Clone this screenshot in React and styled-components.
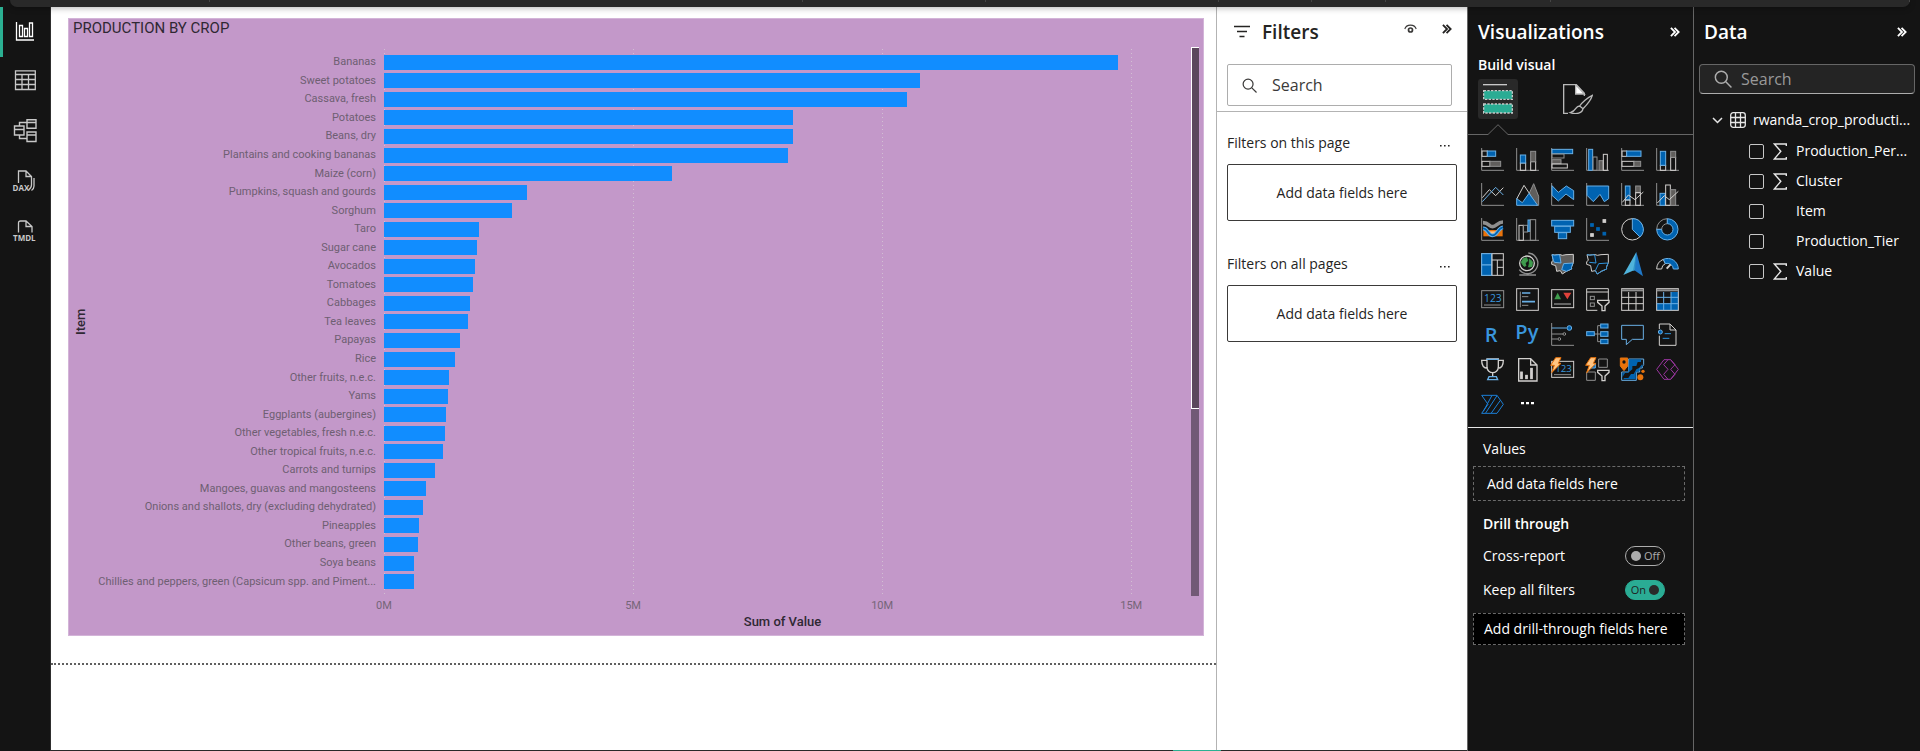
import React from "react";
import styled, { createGlobalStyle } from "styled-components";

const ui = '"Open Sans", "Noto Sans", sans-serif';
const din = 'Roboto, "Liberation Sans", sans-serif';

const GlobalStyle = createGlobalStyle`
  *, *::before, *::after { box-sizing: border-box; }
  body { margin: 0; background: #141414; font-family: ${ui}; font-size: 14px; line-height: 20px; }
  button, input { font: inherit; color: inherit; }
  h2, h3, p, ul { margin: 0; padding: 0; font-size: inherit; font-weight: 400; }
  svg { display: block; flex: none; }
`;

/* ---------- shell ---------- */

const Page = styled.div`
  min-height: 100vh;
  display: flex;
  flex-direction: column;
`;

const Ribbon = styled.header`
  display: flex;
  height: 7px;
  margin: 0 10px;
  background: #292929;
  border-radius: 0 0 10px 10px;
  position: relative;
  z-index: 1;
  box-shadow: 0 1px 6px rgba(0, 0, 0, 0.3);
`;

const RibbonGroup = styled.div`
  flex: ${(p) => p.$span} 1 0;
  height: 2px;
  border-right: 1px solid #454545;
`;

const Workspace = styled.div`
  flex: 1;
  display: flex;
`;

const IconButton = styled.button`
  display: flex;
  align-items: center;
  justify-content: center;
  padding: 0;
  border: 0;
  background: none;
  cursor: pointer;
`;

/* ---------- left rail ---------- */

const Rail = styled.nav`
  flex: none;
  width: 51px;
  background: #141414;
  border-right: 1px solid #2e2e2e;
  display: flex;
  flex-direction: column;
`;

const RailButton = styled(IconButton)`
  height: 50px;
  width: 100%;
  padding-right: 3px;
  border-left: 3px solid ${(p) => (p.$active ? "#2bb092" : "transparent")};
  color: ${(p) => (p.$active ? "#ffffff" : "#c8c8c8")};
`;

/* ---------- report canvas ---------- */

const Canvas = styled.main`
  flex: 1;
  min-width: 0;
  background: #ffffff;
  display: flex;
  flex-direction: column;
`;

const ReportPage = styled.div`
  padding: 11px 12px 27px 17px;
  border-bottom: 2px dotted #606060;
`;

const Card = styled.section`
  display: flex;
  flex-direction: column;
  padding: 1px 4px 3px;
  background: #c398c9;
  border: 1px solid #d3b4d8;
`;

const CardTitle = styled.h2`
  font-family: ${din};
  font-size: 15px;
  line-height: 17px;
  font-weight: 400;
  color: #2f2833;
`;

const ChartBody = styled.div`
  display: grid;
  grid-template-columns: 16px 295px minmax(0, 1fr) 8px;
  grid-template-rows: auto 18px 18px;
  padding-top: 10px;
`;

const AxisTitle = styled.div`
  font-family: ${din};
  font-size: 13px;
  line-height: 16px;
  font-weight: 500;
  color: #2f2833;
  text-align: center;
  ${(p) => p.$vertical && "writing-mode: vertical-rl; transform: rotate(180deg);"}
  ${(p) => !p.$vertical && "grid-column: 3; grid-row: 3; margin-right: 10px;"}
`;

const Plot = styled.ul`
  grid-column: 2 / 4;
  grid-row: 1;
  height: 549px;
  padding: 6px 10px 5px 0;
  list-style: none;
  display: flex;
  flex-direction: column;
  z-index: 1;
`;

const BarRow = styled.li`
  flex: 1;
  display: grid;
  grid-template-columns: 295px minmax(0, 1fr);
  align-items: center;
`;

const BarLabel = styled.span`
  padding-right: 8px;
  text-align: right;
  white-space: nowrap;
  font-family: ${din};
  font-size: 11px;
  line-height: 18px;
  color: #6e5f72;
`;

const Bar = styled.div`
  height: 15px;
  background: #118dff;
`;

const GridColumns = styled.div`
  grid-column: 3;
  grid-row: ${(p) => p.$row};
  display: grid;
  grid-template-columns: 5fr 5fr 5fr 1fr;
  margin-right: 10px;
`;

const GridLine = styled.div`
  width: 1px;
  margin-top: 2px;
  background: repeating-linear-gradient(#d2bfd3 0 1px, transparent 1px 4px);
`;

const Tick = styled.span`
  justify-self: start;
  transform: translateX(-50%);
  font-family: ${din};
  font-size: 11px;
  line-height: 20px;
  color: #756578;
`;

const ScrollTrack = styled.div`
  grid-column: 4;
  grid-row: 1;
  background: #725976;
`;

const ScrollThumb = styled.div`
  height: 66%;
  background: #5b475c;
  border: solid #ffffff;
  border-width: 1px 0 1px 1px;
`;

const StatusLine = styled.footer`
  display: flex;
  justify-content: flex-end;
  height: 1px;
  margin: -1px 453px 0 51px;
  padding-right: 246px;
  background: #292929;
  z-index: 1;

  &::after {
    content: "";
    width: 48px;
    background: #2bb092;
  }
`;

/* ---------- side panes ---------- */

const Pane = styled.aside`
  flex: none;
  width: ${(p) => p.$width};
  display: flex;
  flex-direction: column;
  background: ${(p) => (p.$light ? "#ffffff" : "#141414")};
  color: ${(p) => (p.$light ? "#252423" : "#ffffff")};
  border-left: 1px solid ${(p) => (p.$light ? "#b3b3b3" : "#666666")};
`;

const PaneHeader = styled.header`
  display: flex;
  align-items: center;
  gap: 12px;
  height: 50px;
  padding: 0 ${(p) => p.$right} 0 ${(p) => p.$left};
`;

const PaneTitle = styled.h2`
  flex: 1;
  font-size: 19px;
  line-height: 24px;
  font-weight: 600;
`;

const HeaderActions = styled.div`
  display: flex;
  align-items: center;
  gap: 25px;
  height: 44px;
  align-self: flex-start;
`;

const SearchBox = styled.label`
  display: flex;
  align-items: center;
  gap: ${(p) => (p.$light ? "15px" : "9px")};
  height: ${(p) => (p.$light ? "42px" : "30px")};
  margin: ${(p) => (p.$light ? "7px 15px 5px 10px" : "7px 5px 0")};
  padding: 0 14px;
  border: 1px solid ${(p) => (p.$light ? "#adadad" : "#666666")};
  border-bottom-color: #adadad;
  border-radius: ${(p) => (p.$light ? "2px" : "4px")};
  background: ${(p) => (p.$light ? "#ffffff" : "#242424")};
`;

const SearchInput = styled.input`
  flex: 1;
  min-width: 0;
  padding: 0;
  border: 0;
  outline: 0;
  background: none;
  font-size: 16px;
  line-height: 20px;

  &::placeholder { color: ${(p) => (p.$light ? "#3b3a39" : "#999999")}; opacity: 1; }
`;

const FilterSection = styled.section`
  padding: 0 10px;
  margin-top: 20px;
  margin-bottom: 12px;
`;

const FilterHeading = styled.div`
  display: flex;
  align-items: center;
  justify-content: space-between;
  height: 22px;
  padding-right: 7px;
  margin-bottom: 10px;
`;

const MoreButton = styled(IconButton)`
  padding-top: 6px;
`;

const FilterWell = styled.div`
  display: flex;
  align-items: center;
  justify-content: center;
  height: 57px;
  border: 1px solid #3b3a39;
  border-radius: 2px;
`;

const Rule = styled.div`
  height: 1px;
  background: ${(p) => p.$color};
`;

const BuildTitle = styled.h3`
  padding: 0 10px;
  margin: -2px 0 4px;
  font-weight: 600;
`;

const BuildTabs = styled.div`
  display: flex;
  gap: 40px;
  padding: 0 10px;
`;

const BuildTab = styled(IconButton)`
  width: 40px;
  height: 40px;
  border-radius: 3px;
  background: ${(p) => (p.$active ? "#292929" : "none")};
`;

const TabRule = styled.div`
  display: flex;
  align-items: flex-end;
  height: 16px;
`;

const TabRuleLine = styled.span`
  height: 1px;
  width: ${(p) => p.$width};
  flex: ${(p) => (p.$grow ? 1 : "none")};
  background: #666666;
`;

const Gallery = styled.div`
  display: grid;
  grid-template-columns: repeat(6, 23px);
  grid-auto-rows: 23px;
  gap: 12px;
  padding: 13px 13px 11px;
`;

const Fields = styled.section`
  padding: 11px 8px 0 5px;
`;

const FieldLabel = styled.div`
  padding-left: 10px;
  height: 20px;
  font-weight: ${(p) => (p.$strong ? 600 : 400)};
  margin-top: ${(p) => p.$top || "0"};
`;

const TogglesGroup = styled.div`
  padding-top: 5px;
`;

const DropWell = styled.div`
  display: flex;
  align-items: center;
  height: ${(p) => p.$height};
  margin-top: ${(p) => p.$top};
  padding-left: ${(p) => p.$indent};
  border: 1px dashed #6a6a6a;
  background: ${(p) => (p.$filled ? "#000000" : "none")};
  white-space: nowrap;
`;

const ToggleRow = styled.div`
  display: flex;
  align-items: center;
  justify-content: space-between;
  height: 34px;
  padding: 0 20px 0 10px;
`;

const Toggle = styled.label`
  display: flex;
  flex-direction: ${(p) => (p.$on ? "row-reverse" : "row")};
  align-items: center;
  gap: 3px;
  width: 40px;
  height: 20px;
  padding: 0 5px;
  border: 1px solid ${(p) => (p.$on ? "#2aac94" : "#adadad")};
  border-radius: 10px;
  background: ${(p) => (p.$on ? "#2aac94" : "transparent")};
  color: ${(p) => (p.$on ? "#1f1f1f" : "#adadad")};
  font-size: 11px;
  line-height: 18px;
`;

const ToggleKnob = styled.input`
  appearance: none;
  flex: none;
  width: 10px;
  height: 10px;
  margin: 0;
  border-radius: 50%;
  background: ${(p) => (p.$on ? "#292929" : "#adadad")};
`;

/* ---------- data tree ---------- */

const TableRow = styled.div`
  display: flex;
  align-items: center;
  gap: 7px;
  height: 30px;
  margin-top: 11px;
  padding-left: 18px;
  white-space: nowrap;
`;

const FieldList = styled.div`
  padding-top: 1px;
`;

const FieldRow = styled.label`
  display: grid;
  grid-template-columns: 15px 14px 1fr;
  align-items: center;
  column-gap: 9px;
  height: 30px;
  padding-left: 55px;
  white-space: nowrap;
`;

const FieldCheck = styled.input`
  appearance: none;
  width: 15px;
  height: 15px;
  margin: 0;
  border: 1px solid #c8c8c8;
  border-radius: 2px;
`;

/* ---------- small icons ---------- */

const Chevrons = () => (
  <svg width="10" height="10" viewBox="0 0 11 11" fill="none" stroke="currentColor" strokeWidth="2">
    <path d="M1 1l4.500 4.500L1 10M5 1l4.500 4.500L5 10" />
  </svg>
);

const Magnifier = ({ size, color }) => (
  <svg width={size} height={size} viewBox="0 0 16 16" fill="none" stroke={color} strokeWidth="1.3">
    <circle cx="6.5" cy="6.5" r="5.3" />
    <path d="M10.5 10.5l5 5" />
  </svg>
);

const FilterLines = () => (
  <svg width="16" height="14" viewBox="0 0 16 14" stroke="#252423" strokeWidth="1.5">
    <path d="M0 1.500h16M3 6.500h10M5.500 11.500h5" />
  </svg>
);

const Eye = () => (
  <svg width="13" height="10" viewBox="0 0 13 10" fill="none" stroke="#3b3a39">
    <path d="M.8 5C2.300-.2 10.700-.2 12.200 5" strokeWidth="1.1" />
    <circle cx="6.500" cy="6" r="2" strokeWidth="1.700" />
  </svg>
);

const Dots = () => (
  <svg width="10" height="2" viewBox="0 0 10 2" fill="currentColor">
    <path d="M0 0h1.600v1.600H0zM4 0h1.600v1.600H4zM8 0h1.600v1.600H8z" />
  </svg>
);

const Sigma = () => (
  <svg width="14" height="17" viewBox="0 0 14 17" fill="none" stroke="#e6e6e6" strokeWidth="1.4">
    <path d="M13.300 3V1H1.300l6.500 7.300-6.500 7.700h12v-2" />
  </svg>
);

const TableGlyph = () => (
  <svg width="16" height="16" viewBox="0 0 16 16" fill="none" stroke="#e6e6e6" strokeWidth="1.3">
    <rect x=".7" y=".7" width="14.600" height="14.600" rx="2.500" />
    <path d="M5.500.7v14.600M10.500.7v14.600M.7 5.500h14.600M.7 10.500h14.600" />
  </svg>
);

const railViews = [
  {
    name: "Report view",
    art: (
      <g strokeWidth="1.300">
        <path d="M3.500 2v18H21" />
        <path d="M6.500 5.500h3v11h-3zM11.500 8.500h3v8h-3zM16.500 3h3v13.500h-3z" />
      </g>
    ),
  },
  {
    name: "Table view",
    art: (
      <g strokeWidth="1.300">
        <path d="M2.500.8h19.800v18.700H2.500zM2.500 4.500h19.800" />
        <path d="M2.500 9.500h19.800M2.500 14.500h19.800M9 4.500v15M15.500 4.500v15" />
      </g>
    ),
  },
  {
    name: "Model view",
    art: (
      <g strokeWidth="1.400">
        <path d="M14-.2h9v8.500h-9zM14 2.500h9M14 12h9v9.500h-9zM14 15h9M1.500 6h9.500v9H1.500zM1.500 9.500H11" />
        <path d="M6.500 6V2.500H14M6.500 15v3.500H14" />
      </g>
    ),
  },
  {
    name: "DAX query view",
    art: (
      <g strokeWidth="1.300">
        <path d="M5.500 13V1h7.500l5.500 5.500v8.500q0 3-3 5M13 1v5.500h5.500M21 8v8q0 3-2.500 4.500" />
        <text x="-.5" y="20.500">DAX</text>
      </g>
    ),
  },
  {
    name: "TMDL view",
    art: (
      <g strokeWidth="1.300">
        <path d="M5.500 12.500V3q0-2 2-2H13l6 5.500v6M13 1v5.500h6" />
        <text x="0" y="21">TMDL</text>
      </g>
    ),
  },
];

const RailArt = styled.svg`
  fill: none;
  stroke: currentColor;
  overflow: visible;

  text {
    fill: currentColor;
    stroke: none;
    font: 700 8px ${ui};
  }
`;

/* ---------- visual gallery icons ---------- */

const W = "#d2d0ce";
const G = "#8f8f8f";
const D = "#605e5c";
const B = "#0063b1";
const L = "#69afe5";

const Axis = () => <path d="M2 0V67H69" stroke={G} />;
const box = (x, y, w, h, stroke, fill) => (
  <rect x={x} y={y} width={w} height={h} stroke={stroke} fill={fill || "none"} />
);
const Bolt = () => (
  <path d="M14-1H30L22 16H30L2 44L10 22H-1Z" fill="#ffc583" stroke="#e8730c" strokeWidth="3" />
);
const Funnel = () => (
  <path d="M35 37H69V43L57 54V68H48V54L35 43Z" fill="#141414" stroke={W} strokeWidth="4" />
);
const mapShape = "M3 5C15 9 24 1 34 7L45 5 67 4V29C63 40 60 42 62 48L46 55 34 63 28 53 17 55 14 38 2 34V26L7 22Z";

const visuals = [
  ["Stacked bar chart", <><Axis />{box(3, 9, 16, 16, W)}{box(19, 9, 25, 16, L, B)}{box(3, 40, 24, 15, W)}{box(27, 40, 32, 15, G, D)}</>],
  ["Stacked column chart", <><Axis />{box(13, 45, 16, 22, W)}{box(13, 21, 16, 24, L, B)}{box(44, 41, 15, 26, W)}{box(44, 10, 15, 31, G, D)}</>],
  ["Clustered bar chart", <><Axis />{box(3, 4, 62, 13, L, B)}{box(3, 18, 36, 12, G)}{box(3, 35, 27, 12, G, D)}{box(3, 48, 46, 12, W)}</>],
  ["Clustered column chart", <><Axis />{box(8, 4, 12, 63, L, B)}{box(21, 27, 12, 40, G)}{box(39, 38, 12, 29, G, D)}{box(52, 19, 12, 48, W)}</>],
  ["100% stacked bar chart", <><Axis />{box(3, 9, 14, 16, W)}{box(17, 9, 43, 16, L, B)}{box(3, 40, 36, 15, W)}{box(39, 40, 20, 15, G, D)}</>],
  ["100% stacked column chart", <><Axis />{box(13, 52, 16, 15, W)}{box(13, 10, 16, 42, L, B)}{box(44, 28, 15, 39, W)}{box(44, 10, 15, 18, G, D)}</>],
  ["Line chart", <><Axis /><path d="M4 44L25 20 44 38 67 14" stroke={W} /><path d="M4 56L44 13 67 36" stroke={L} /></>],
  ["Area chart", <><path d="M40 30L53 2 68 40V67H60Z" fill={D} stroke={G} /><path d="M2 48L24 7 42 34" stroke={W} /><path d="M2 67V47L19 59 39 31 65 67Z" fill={B} stroke={L} /></>],
  ["Stacked area chart", <><Axis /><path d="M3 8L22 28 46 9 68 23V50L45 33 22 54 3 37Z" fill={B} stroke={L} /></>],
  ["100% stacked area chart", <><Axis /><path d="M3 9H68V47L55 56 42 34 22 56 3 37Z" fill={B} stroke={L} /></>],
  ["Line and stacked column chart", <><Axis />{box(13, 9, 14, 42, L, B)}{box(13, 51, 14, 16, W)}{box(44, 9, 14, 20, G, D)}{box(44, 29, 14, 38, W)}<path d="M4 58L22 36 42 50 67 27" stroke={W} /></>],
  ["Line and clustered column chart", <><Axis />{box(12, 31, 16, 36, L, B)}{box(29, 6, 14, 61, W)}{box(44, 20, 15, 47, G, D)}<path d="M4 60L25 38 40 50 67 25" stroke={W} /></>],
  ["Ribbon chart", <><Axis /><path d="M7 36H65V55H7Z" fill="#e8730c" /><path d="M26 40H45V52H26Z" fill="#ffc583" /><path d="M6 14C24 14 24 26 35 26S50 12 66 12" stroke={G} strokeWidth="11" /><path d="M6 31C22 31 20 52 35 52S50 30 66 28" stroke={L} strokeWidth="11" /><path d="M6 31C22 31 20 52 35 52S50 30 66 28" stroke={B} strokeWidth="5" /></>],
  ["Waterfall chart", <><Axis />{box(9, 22, 13, 45, W)}{box(22, 22, 13, 20, G)}{box(36, 6, 6, 34, L, B)}{box(43, 5, 16, 62, G)}</>],
  ["Funnel", <>{box(2, 7, 66, 17, L, B)}{box(11, 25, 47, 18, L, B)}{box(22, 44, 25, 18, L, B)}</>],
  ["Scatter chart", <><Axis />{box(14, 17, 8, 8, B, B)}{box(51, 5, 8, 8, W, W)}{box(32, 29, 8, 8, B, B)}{box(14, 47, 8, 8, W, W)}{box(51, 43, 8, 8, B, B)}</>],
  ["Pie chart", <><circle cx="34" cy="34" r="32" stroke={W} /><path d="M34 2A32 32 0 0 1 57 57L34 34Z" fill={B} stroke={L} /></>],
  ["Donut chart", <><path d="M34 2A32 32 0 0 0 2 34H17A17 17 0 0 1 34 17Z" stroke={G} /><path d="M34 2A32 32 0 1 1 2 34H17A17 17 0 1 0 34 17Z" fill={B} stroke={L} /></>],
  ["Treemap", <>{box(2, 2, 65, 65, W)}{box(2, 2, 30, 34, L, B)}{box(2, 36, 30, 31, L, B)}<path d="M33 21H67M49 21V67M49 43H67M33 2V67" stroke={W} /></>],
  ["Map", <><circle cx="33" cy="31" r="22" stroke={W} strokeWidth="4" /><path d="M22 17L32 14 35 24 27 30 30 38 24 40 16 28ZM40 18L49 26 48 40 38 42 40 32Z" fill="#3f9c4d" stroke="#3f9c4d" /><path d="M37 0A31 31 0 1 1 10 50M36 60V66M10 66H60" stroke={G} strokeWidth="4" /></>],
  ["Filled map", <><path d={mapShape} fill={D} stroke={W} /><path d="M3 5C15 9 20 3 26 6L30 30 10 28 7 22Z" fill={B} stroke={L} /><path d="M38 32L66 30C63 40 60 42 62 48L46 55 32 50Z" fill={B} stroke={L} /></>],
  ["Shape map", <><path d={mapShape} stroke={W} /><path d="M3 5C15 9 20 3 26 6L30 30 10 28M38 32L66 30C63 40 60 42 62 48L46 55 34 63 28 53L38 32Z" stroke="#2f93dc" /></>],
  ["Azure map", <><path d="M46-3L7 66 42 50Z" fill="#50b4dc" /><path d="M46-3L66 70 40 52Z" fill="#1f78c8" /><path d="M46-3L42 52 36 54Z" fill="#2f93c8" /></>],
  ["Gauge", <><path d="M2 48A32 32 0 0 1 22 19L28 32A18 18 0 0 0 17 48Z" stroke={W} /><path d="M22 19A32 32 0 0 1 67 48H52A18 18 0 0 0 28 32Z" fill={B} stroke={L} /><path d="M32 47L44 34" stroke={W} strokeWidth="6" /></>],
  ["Card", <>{box(2, 8, 66, 51, G)}<text x="9" y="43" fontSize="31" fill="#3a96dd">123</text><path d="M9 51H59" stroke={G} /></>],
  ["Multi-row card", <>{box(2, 2, 65, 65, W)}<path d="M13 11V58M18 26H37M18 52H37" stroke={G} /><path d="M18 15H43M18 41H57" stroke={L} strokeWidth="5" /></>],
  ["KPI", <>{box(2, 5, 66, 54, W)}<path d="M10 34L20 14 30 34Z" fill="#3f9c4d" /><path d="M37 14H61L49 34Z" fill="#e0413a" /><path d="M9 48H60" stroke={G} strokeWidth="4" /></>],
  ["Slicer", <><path d="M34 67H2V2H67V36M2 12H67" stroke={W} />{box(13, 25, 12, 10, G)}{box(13, 45, 12, 10, G)}<Funnel /></>],
  ["Table", <>{box(2, 2, 65, 65, W)}<path d="M2 7H67" stroke={G} strokeWidth="6" /><path d="M2 28H67M2 47H67M23 12V67M45 12V67" stroke={W} /></>],
  ["Matrix", <><path d="M45 12H67V67H2V47H45Z" fill={B} />{box(2, 2, 65, 65, W)}<path d="M2 7H67" stroke={G} strokeWidth="6" /><path d="M2 28H67M2 47H67M23 12V67M45 12V67" stroke={L} /></>],
  ["R script visual", <text x="11" y="57" fontSize="60" fontWeight="600" fill="#3a96dd">R</text>],
  ["Python visual", <text x="-2" y="48" fontSize="60" fontWeight="600" fill="#3a96dd">Py</text>],
  ["Key influencers", <><Axis /><path d="M2 33H37M2 48H20" stroke={G} /><circle cx="40" cy="33" r="4" stroke={G} /><circle cx="25" cy="48" r="4" stroke={G} /><path d="M2 15H47" stroke={L} /><circle cx="55" cy="15" r="7" fill={B} stroke={L} /></>],
  ["Decomposition tree", <><path d="M25 33H44M35 8V56M35 8H44M35 56H44" stroke={G} />{box(2, 26, 23, 12, L, B)}{box(44, 3, 22, 12, L, B)}{box(44, 26, 22, 14, L, B)}{box(44, 49, 22, 13, L, B)}</>],
  ["Q&A", <path d="M2 7H67V49H34L16 65V49H2Z" stroke={L} />],
  ["Narrative", <><path d="M10 18V3H42L60 21V67H10V38M42 3V21H60" stroke={W} /><circle cx="13" cy="27" r="6" fill={B} stroke={L} /><path d="M26 32H45M20 46H40" stroke="#2f93dc" /></>],
  ["Metrics", <><path d="M18 3H52V26C52 38 43 44 35 44S18 38 18 26ZM18 7H2C2 24 8 31 20 31M52 7H67C67 24 62 31 50 31M35 44V56" stroke={W} strokeWidth="4" /><path d="M16 4H54M20 65H50L46 56H24Z" stroke={L} strokeWidth="4" /></>],
  ["Paginated report", <><path d="M8 2H44L63 21V69H8ZM44 2V21H63" stroke={W} strokeWidth="4" />{box(14, 42, 5, 20, W, W)}{box(29, 52, 5, 10, W, W)}{box(44, 31, 5, 31, W, W)}</>],
  ["New card", <>{box(2, 10, 66, 48, W)}<text x="13" y="43" fontSize="29" fill="#3a96dd">123</text><path d="M9 50H60" stroke={G} /><Bolt /></>],
  ["Button slicer", <><path d="M38 3H64V28H38ZM2 42H28V67H2Z" stroke={G} /><path d="M28 18V30H14Z" fill={B} stroke={L} /><Bolt /><Funnel /></>],
  ["ArcGIS map", <><path d="M23 3H68V20L64 26V30H56V42H46V67H2V42H23Z" fill="#141414" stroke={L} /><path d="M24 4H60V12H50L46 24H34V34L24 42H14L4 58V44H22Z" fill={B} /><path d="M64 18V28H56V38L44 44V64H8V60H22L30 48H38L46 34 54 30Z" fill={B} /><path d="M-2 0H20V24L9 38-2 24Z" fill="#e8730c" stroke="#e8730c" /><circle cx="9" cy="12" r="5" fill="#141414" /><circle cx="58" cy="58" r="9" fill="#e8730c" /><circle cx="66" cy="40" r="5" fill="#e8730c" /></>],
  ["Power Apps", <path d="M24 5H44L57 20 44 34 57 49 44 64H24L2 34ZM36 5L23 20 36 34 23 49 36 64M44 5L67 34 44 64" stroke="#9b35a0" />],
  ["Power Automate", <path d="M2 7H48L67 34 48 61H2L21 34ZM33 7L7 55M48 8L14 60M58 22L31 60" stroke="#1b7fd6" />],
  ["More visuals", <path d="M15 27H24V34H15ZM30 27H39V34H30ZM45 27H54V34H45Z" fill="#ffffff" />],
];

const VisualArt = styled.svg`
  width: 23px;
  height: 23px;
  fill: none;
  stroke-width: 3px;
  overflow: visible;
  font-family: ${ui};
`;

const BuildArt = () => (
  <svg width="30" height="30" viewBox="0 0 90 90" fill="#2aac94">
    <path d="M0 2H72" stroke="#c8c8c8" strokeWidth="4" />
    <path d="M2 20H88V46H2ZM2 60H88V87H2Z" stroke="#c8c8c8" strokeWidth="4" strokeDasharray="7 4" />
  </svg>
);

const FormatArt = () => (
  <svg width="30" height="30" viewBox="0 0 90 90" fill="none" stroke="#b8b8b8" strokeWidth="4">
    <path d="M15 88H2V2H40L64 28V36" />
    <path d="M38 2V30H64Z" fill="#ffffff" />
    <path d="M88 34C74 40 56 56 50 66L60 74C70 64 84 48 88 34ZM50 66C36 66 42 80 22 86 40 92 58 88 60 74" />
  </svg>
);

/* ---------- data ---------- */

const AXIS_MAX = 16;

const crops = [
  ["Bananas", 14.73], ["Sweet potatoes", 10.77], ["Cassava, fresh", 10.5], ["Potatoes", 8.22],
  ["Beans, dry", 8.21], ["Plantains and cooking bananas", 8.12], ["Maize (corn)", 5.79],
  ["Pumpkins, squash and gourds", 2.87], ["Sorghum", 2.56], ["Taro", 1.91], ["Sugar cane", 1.87],
  ["Avocados", 1.83], ["Tomatoes", 1.79], ["Cabbages", 1.73], ["Tea leaves", 1.68], ["Papayas", 1.52],
  ["Rice", 1.42], ["Other fruits, n.e.c.", 1.31], ["Yams", 1.28], ["Eggplants (aubergines)", 1.24],
  ["Other vegetables, fresh n.e.c.", 1.22], ["Other tropical fruits, n.e.c.", 1.18],
  ["Carrots and turnips", 1.02], ["Mangoes, guavas and mangosteens", 0.84],
  ["Onions and shallots, dry (excluding dehydrated)", 0.79], ["Pineapples", 0.7],
  ["Other beans, green", 0.68], ["Soya beans", 0.6],
  ["Chillies and peppers, green (Capsicum spp. and Piment...", 0.6],
];

const ticks = ["0M", "5M", "10M", "15M"];

const fields = [
  ["Production_Per...", true], ["Cluster", true], ["Item", false], ["Production_Tier", false], ["Value", true],
];

/* ---------- composition ---------- */

function ProductionChart() {
  return (
    <Card>
      <CardTitle>PRODUCTION BY CROP</CardTitle>
      <ChartBody>
        <AxisTitle $vertical>Item</AxisTitle>
        <GridColumns $row={1}>
          {ticks.map((t) => <GridLine key={t} />)}
        </GridColumns>
        <Plot>
          {crops.map(([name, value]) => (
            <BarRow key={name}>
              <BarLabel>{name}</BarLabel>
              <Bar style={{ width: `${(value / AXIS_MAX) * 100}%` }} />
            </BarRow>
          ))}
        </Plot>
        <ScrollTrack><ScrollThumb /></ScrollTrack>
        <GridColumns $row={2}>
          {ticks.map((t) => <Tick key={t}>{t}</Tick>)}
        </GridColumns>
        <AxisTitle>Sum of Value</AxisTitle>
      </ChartBody>
    </Card>
  );
}

function FilterGroup({ title }) {
  return (
    <FilterSection>
      <FilterHeading>
        <h3>{title}</h3>
        <MoreButton aria-label={`${title} options`}><Dots /></MoreButton>
      </FilterHeading>
      <FilterWell>Add data fields here</FilterWell>
    </FilterSection>
  );
}

function ToggleField({ label, on }) {
  const id = label.toLowerCase().replace(/ /g, "-");
  return (
    <ToggleRow>
      <label htmlFor={id}>{label}</label>
      <Toggle $on={on}>
        <ToggleKnob id={id} type="checkbox" role="switch" defaultChecked={on} $on={on} />
        {on ? "On" : "Off"}
      </Toggle>
    </ToggleRow>
  );
}

export default function App() {
  return (
    <>
      <GlobalStyle />
      <Page>
        <Ribbon>
          {[200, 594, 183, 233, 92, 74, 164, 360].map((span) => <RibbonGroup key={span} $span={span} />)}
        </Ribbon>
        <Workspace>
          <Rail>
            {railViews.map((view, i) => (
              <RailButton key={view.name} $active={i === 0} aria-label={view.name}>
                <RailArt width="24" height="24" viewBox="0 0 24 24">{view.art}</RailArt>
              </RailButton>
            ))}
          </Rail>

          <Canvas>
            <ReportPage><ProductionChart /></ReportPage>
          </Canvas>

          <Pane $light $width="251px">
            <PaneHeader $left="17px" $right="15px">
              <FilterLines />
              <PaneTitle>Filters</PaneTitle>
              <HeaderActions>
                <IconButton aria-label="Show or hide filters"><Eye /></IconButton>
                <IconButton aria-label="Collapse filters"><Chevrons /></IconButton>
              </HeaderActions>
            </PaneHeader>
            <SearchBox $light>
              <Magnifier size={15} color="#3b3a39" />
              <SearchInput $light type="search" placeholder="Search" aria-label="Search filters" />
            </SearchBox>
            <Rule $color="#b3b3b3" />
            <FilterGroup title="Filters on this page" />
            <FilterGroup title="Filters on all pages" />
          </Pane>

          <Pane $width="226px">
            <PaneHeader $left="10px" $right="13px">
              <PaneTitle>Visualizations</PaneTitle>
              <IconButton aria-label="Collapse visualizations"><Chevrons /></IconButton>
            </PaneHeader>
            <BuildTitle>Build visual</BuildTitle>
            <BuildTabs>
              <BuildTab $active aria-label="Build visual"><BuildArt /></BuildTab>
              <BuildTab aria-label="Format visual"><FormatArt /></BuildTab>
            </BuildTabs>
            <TabRule>
              <TabRuleLine $width="20px" />
              <svg width="20" height="11" viewBox="0 0 20 11" fill="none" stroke="#666666">
                <path d="M0 10.500L10 .7L20 10.500" />
              </svg>
              <TabRuleLine $grow />
            </TabRule>
            <Gallery>
              {visuals.map(([name, art]) => (
                <IconButton key={name} aria-label={name}>
                  <VisualArt viewBox="0 0 69 69">{art}</VisualArt>
                </IconButton>
              ))}
            </Gallery>
            <Rule $color="#e6e6e6" />
            <Fields>
              <FieldLabel>Values</FieldLabel>
              <DropWell $height="35px" $top="7px" $indent="13px">Add data fields here</DropWell>
              <FieldLabel $strong $top="13px">Drill through</FieldLabel>
              <TogglesGroup>
                <ToggleField label="Cross-report" on={false} />
                <ToggleField label="Keep all filters" on />
              </TogglesGroup>
              <DropWell $filled $height="32px" $top="6px" $indent="10px">Add drill-through fields here</DropWell>
            </Fields>
          </Pane>

          <Pane $width="227px">
            <PaneHeader $left="10px" $right="13px">
              <PaneTitle>Data</PaneTitle>
              <IconButton aria-label="Collapse data"><Chevrons /></IconButton>
            </PaneHeader>
            <SearchBox>
              <Magnifier size={18} color="#adadad" />
              <SearchInput type="search" placeholder="Search" aria-label="Search data" />
            </SearchBox>
            <TableRow>
              <IconButton aria-label="Collapse table">
                <svg width="11" height="7" viewBox="0 0 11 7" fill="none" stroke="#e6e6e6" strokeWidth="1.5">
                  <path d="M1 1l4.500 4.500L10 1" />
                </svg>
              </IconButton>
              <TableGlyph />
              <span>rwanda_crop_producti...</span>
            </TableRow>
            <FieldList>
              {fields.map(([name, numeric]) => (
                <FieldRow key={name}>
                  <FieldCheck type="checkbox" />
                  {numeric ? <Sigma /> : <span />}
                  <span>{name}</span>
                </FieldRow>
              ))}
            </FieldList>
          </Pane>
        </Workspace>
        <StatusLine />
      </Page>
    </>
  );
}
